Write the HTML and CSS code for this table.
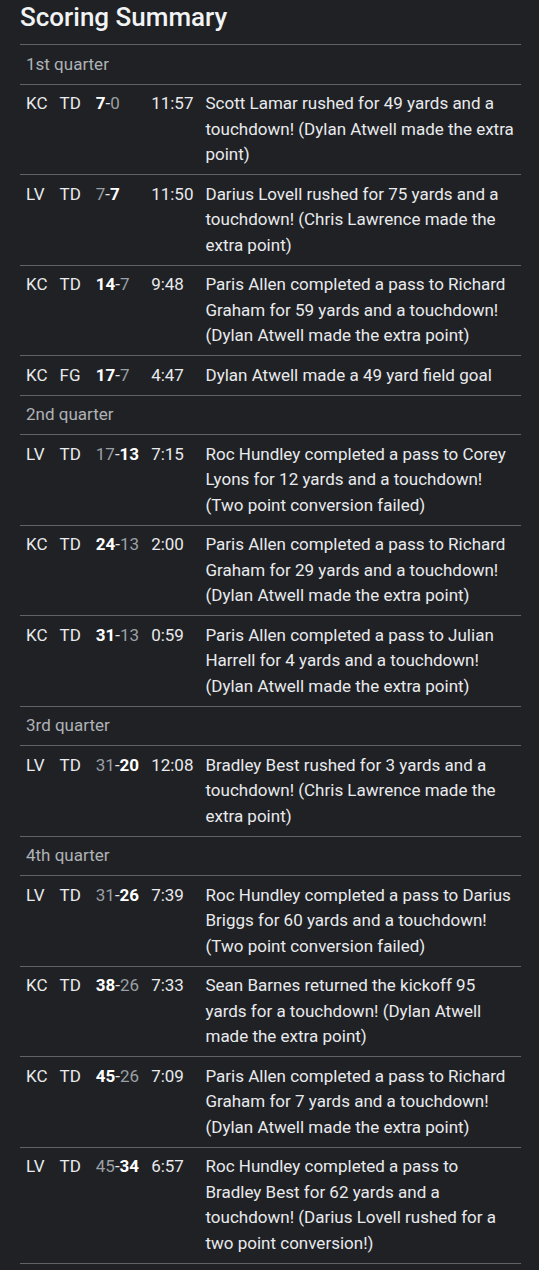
FILE: index.html
```html
<!DOCTYPE html>
<html lang="en">
<head>
<meta charset="utf-8">
<title>Scoring Summary</title>
<link rel="stylesheet" href="styles.css">
</head>
<body>
<h2 class="title">Scoring Summary</h2>
<table class="summary">
<tbody>
<tr class="quarter"><td colspan="5">1st quarter</td></tr>
<tr><td>KC</td><td class="type">TD</td><td class="score"><b>7</b>-<span class="dim">0</span></td><td>11:57</td><td class="desc">Scott Lamar rushed for 49 yards and a touchdown! (Dylan Atwell made the extra point)</td></tr>
<tr><td>LV</td><td class="type">TD</td><td class="score"><span class="dim">7</span>-<b>7</b></td><td>11:50</td><td class="desc">Darius Lovell rushed for 75 yards and a touchdown! (Chris Lawrence made the extra point)</td></tr>
<tr><td>KC</td><td class="type">TD</td><td class="score"><b>14</b>-<span class="dim">7</span></td><td>9:48</td><td class="desc">Paris Allen completed a pass to Richard Graham for 59 yards and a touchdown! (Dylan Atwell made the extra point)</td></tr>
<tr><td>KC</td><td class="type">FG</td><td class="score"><b>17</b>-<span class="dim">7</span></td><td>4:47</td><td class="desc">Dylan Atwell made a 49 yard field goal</td></tr>
<tr class="quarter"><td colspan="5">2nd quarter</td></tr>
<tr><td>LV</td><td class="type">TD</td><td class="score"><span class="dim">17</span>-<b>13</b></td><td>7:15</td><td class="desc">Roc Hundley completed a pass to Corey Lyons for 12 yards and a touchdown! (Two point conversion failed)</td></tr>
<tr><td>KC</td><td class="type">TD</td><td class="score"><b>24</b>-<span class="dim">13</span></td><td>2:00</td><td class="desc">Paris Allen completed a pass to Richard Graham for 29 yards and a touchdown! (Dylan Atwell made the extra point)</td></tr>
<tr><td>KC</td><td class="type">TD</td><td class="score"><b>31</b>-<span class="dim">13</span></td><td>0:59</td><td class="desc">Paris Allen completed a pass to Julian Harrell for 4 yards and a touchdown! (Dylan Atwell made the extra point)</td></tr>
<tr class="quarter"><td colspan="5">3rd quarter</td></tr>
<tr><td>LV</td><td class="type">TD</td><td class="score"><span class="dim">31</span>-<b>20</b></td><td>12:08</td><td class="desc">Bradley Best rushed for 3 yards and a touchdown! (Chris Lawrence made the extra point)</td></tr>
<tr class="quarter"><td colspan="5">4th quarter</td></tr>
<tr><td>LV</td><td class="type">TD</td><td class="score"><span class="dim">31</span>-<b>26</b></td><td>7:39</td><td class="desc">Roc Hundley completed a pass to Darius Briggs for 60 yards and a touchdown! (Two point conversion failed)</td></tr>
<tr><td>KC</td><td class="type">TD</td><td class="score"><b>38</b>-<span class="dim">26</span></td><td>7:33</td><td class="desc">Sean Barnes returned the kickoff 95 yards for a touchdown! (Dylan Atwell made the extra point)</td></tr>
<tr><td>KC</td><td class="type">TD</td><td class="score"><b>45</b>-<span class="dim">26</span></td><td>7:09</td><td class="desc">Paris Allen completed a pass to Richard Graham for 7 yards and a touchdown! (Dylan Atwell made the extra point)</td></tr>
<tr><td>LV</td><td class="type">TD</td><td class="score"><span class="dim">45</span>-<b>34</b></td><td>6:57</td><td class="desc">Roc Hundley completed a pass to Bradley Best for 62 yards and a touchdown! (Darius Lovell rushed for a two point conversion!)</td></tr>
</tbody>
</table>
</body>
</html>
```
FILE: styles.css
```css
html, body {
  background: #202124;
}
body {
  margin: 0;
  padding: 0 18px 0 20px;
  font-family: Roboto, "Liberation Sans", sans-serif;
  color: #e8eaed;
}
.title {
  margin: 1px 0 11px 0;
  font-size: 26px;
  line-height: 32px;
  font-weight: 500;
  color: #f1f3f4;
}
.summary {
  width: 100%;
  border-collapse: collapse;
  border-top: 1px solid #5f6368;
  font-size: 17px;
  line-height: 25.5px;
}
.summary td {
  padding: 6.5px 6px;
  border-bottom: 1px solid #5f6368;
  vertical-align: top;
  white-space: nowrap;
  text-align: left;
}
.summary td.type {
  padding-right: 9px;
}
.summary td.desc {
  white-space: normal;
  width: 100%;
}
.quarter td {
  color: #aeb2b7;
}
.score b {
  font-weight: 700;
  color: #ffffff;
}
.dim {
  color: #9aa0a6;
}
```
